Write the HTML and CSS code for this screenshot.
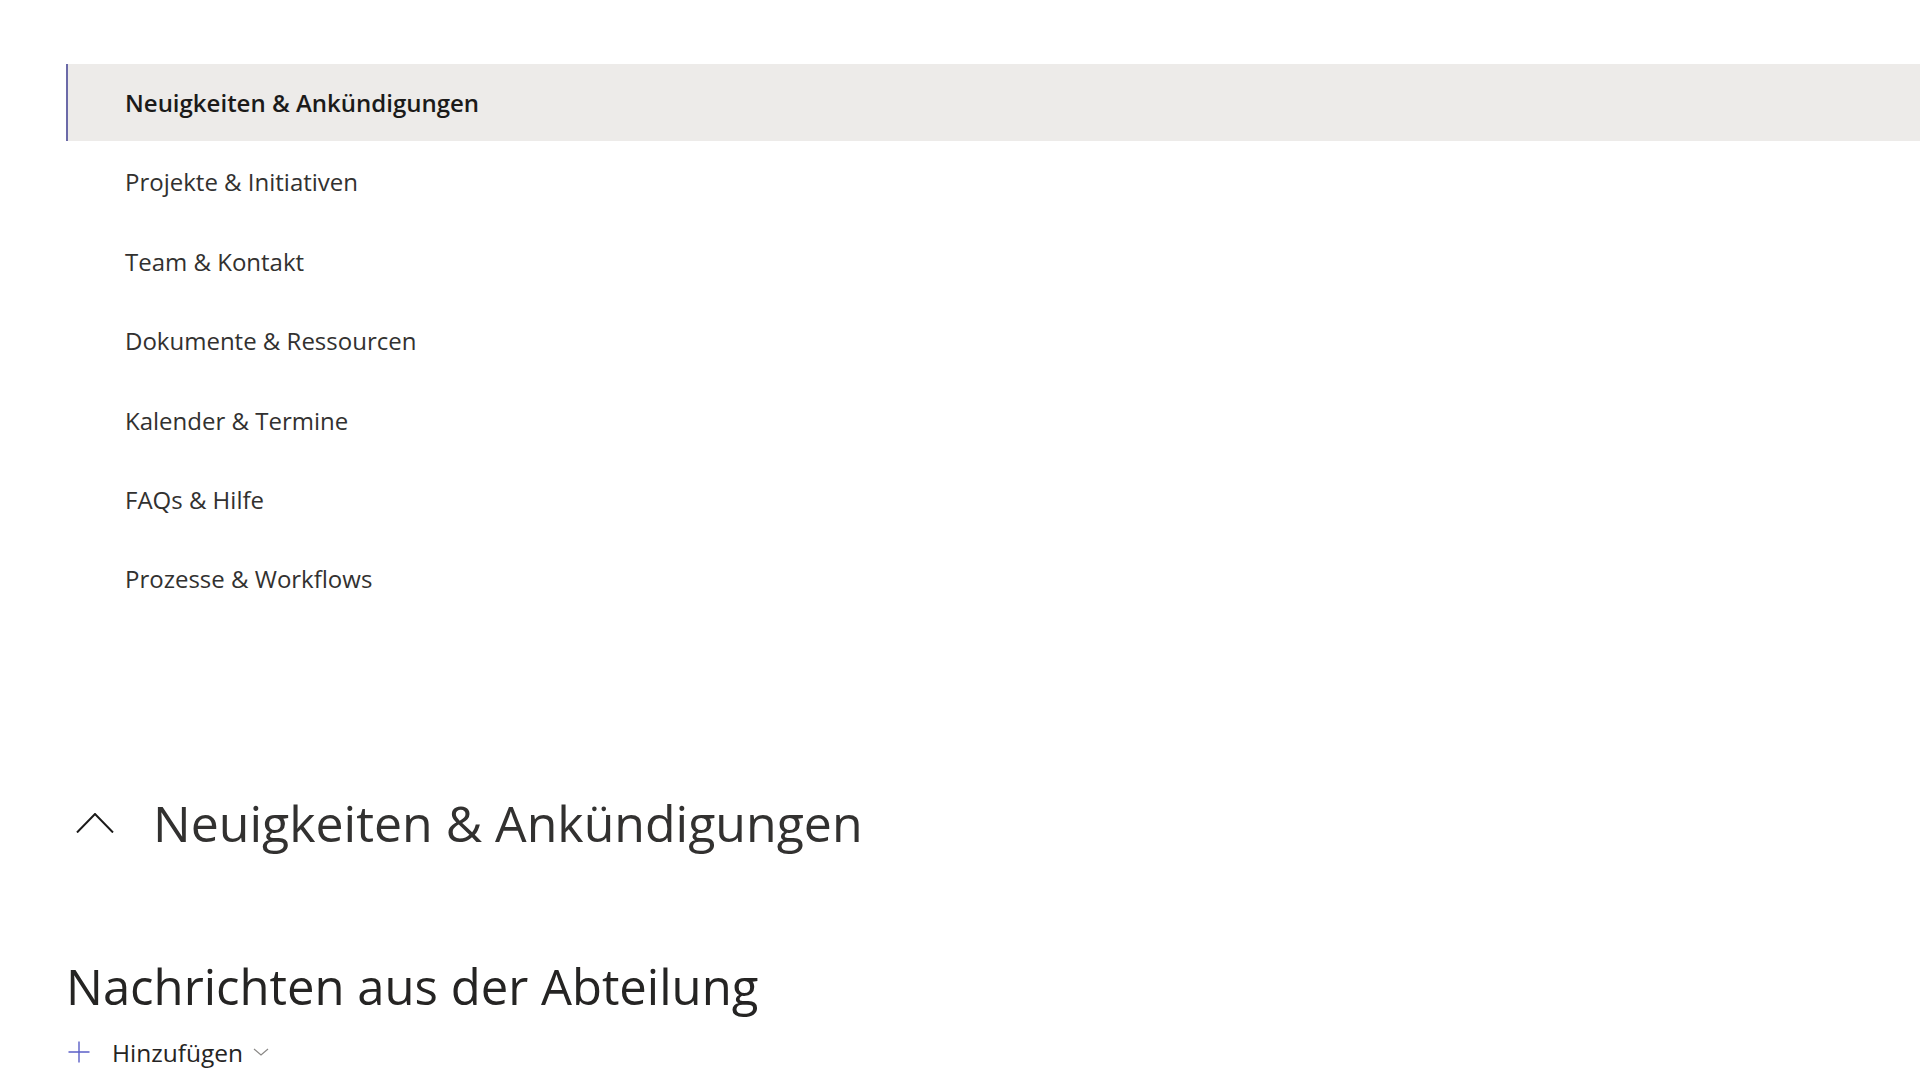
FILE: index.html
```
<!DOCTYPE html>
<html lang="de">
<head>
<meta charset="utf-8">
<title>Neuigkeiten & Ankündigungen</title>
<link rel="stylesheet" href="styles.css">
</head>
<body>
<div class="page">
  <nav class="tabs">
    <a class="tab is-selected">Neuigkeiten &amp; Ankündigungen</a>
    <a class="tab">Projekte &amp; Initiativen</a>
    <a class="tab">Team &amp; Kontakt</a>
    <a class="tab">Dokumente &amp; Ressourcen</a>
    <a class="tab">Kalender &amp; Termine</a>
    <a class="tab">FAQs &amp; Hilfe</a>
    <a class="tab">Prozesse &amp; Workflows</a>
  </nav>

  <section class="section">
    <div class="section-head">
      <svg class="chevron-up" width="38" height="20" viewBox="0 0 38 20" aria-hidden="true">
        <path d="M1 19.5 L19 1 L37 19.5" fill="none" stroke="#1b1a19" stroke-width="2"/>
      </svg>
      <h2 class="section-title">Neuigkeiten &amp; Ankündigungen</h2>
    </div>

    <h3 class="news-title">Nachrichten aus der Abteilung</h3>
    <div class="add-row">
      <svg class="plus" width="22" height="22" viewBox="0 0 22 22" aria-hidden="true">
        <path d="M11 0.5 V21.5 M0.5 11 H21.5" fill="none" stroke="#5b5fc7" stroke-width="1.4"/>
      </svg>
      <span class="add-label">Hinzufügen</span>
      <svg class="chevron-down" width="16" height="8" viewBox="0 0 16 8" aria-hidden="true">
        <path d="M1 1 L8 7 L15 1" fill="none" stroke="#8a8886" stroke-width="1.2"/>
      </svg>
    </div>
  </section>
</div>
</body>
</html>
```

FILE: styles.css
```
html, body {
  margin: 0;
  padding: 0;
  background: #ffffff;
}

body {
  font-family: "Open Sans", "Noto Sans", "Liberation Sans", sans-serif;
  color: #252423;
  width: 1920px;
  height: 1080px;
  overflow: hidden;
}

.page {
  padding-left: 66px;
  padding-top: 64px;
}

.tabs {
  display: flex;
  flex-direction: column;
  gap: 2.4px;
}

.tab {
  display: flex;
  align-items: center;
  height: 77px;
  padding-left: 59px;
  font-size: 24px;
  color: #323130;
  text-decoration: none;
  box-sizing: border-box;
}

.tab.is-selected {
  background: #edebe9;
  border-left: 2px solid #6b6aa8;
  padding-left: 57px;
  font-weight: 600;
  color: #1b1a19;
}

.section {
  padding-top: 176px;
}

.section-head {
  display: flex;
  align-items: center;
  height: 60px;
}

.chevron-up {
  margin-left: 10px;
  margin-right: 39px;
}

.section-title {
  margin: 0;
  font-size: 50px;
  font-weight: 400;
  line-height: 60px;
  color: #323130;
}

.news-title {
  margin: 105px 0 0 0;
  font-size: 49px;
  font-weight: 400;
  color: #252423;
  line-height: 56px;
}

.add-row {
  display: flex;
  align-items: center;
  height: 40px;
  margin-top: 18px;
}

.plus {
  margin-left: 2px;
  margin-right: 22px;
}

.add-label {
  font-size: 24.5px;
  color: #252423;
}

.chevron-down {
  margin-left: 10px;
}
```
